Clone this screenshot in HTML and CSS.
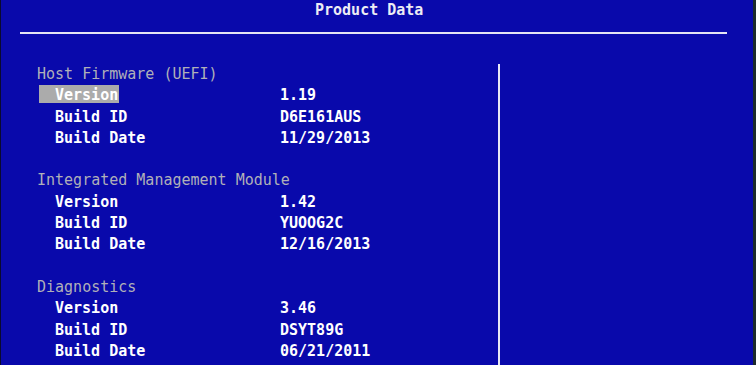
FILE: index.html
```html
<!DOCTYPE html>
<html>
<head>
<meta charset="utf-8">
<link rel="stylesheet" href="styles.css">
</head>
<body>
<div class="screen">
  <div class="edge-left"></div>
  <div class="main">
    <header class="header">
      <div class="title">Product Data</div>
      <div class="rule"></div>
    </header>
    <div class="content">
      <div class="panel">
        <section class="group">
          <div class="heading">Host Firmware (UEFI)</div>
          <div class="row"><span class="label selected">Version</span><span class="value">1.19</span></div>
          <div class="row"><span class="label">Build ID</span><span class="value">D6E161AUS</span></div>
          <div class="row"><span class="label">Build Date</span><span class="value">11/29/2013</span></div>
        </section>
        <section class="group">
          <div class="heading">Integrated Management Module</div>
          <div class="row"><span class="label">Version</span><span class="value">1.42</span></div>
          <div class="row"><span class="label">Build ID</span><span class="value">YUOOG2C</span></div>
          <div class="row"><span class="label">Build Date</span><span class="value">12/16/2013</span></div>
        </section>
        <section class="group">
          <div class="heading">Diagnostics</div>
          <div class="row"><span class="label">Version</span><span class="value">3.46</span></div>
          <div class="row"><span class="label">Build ID</span><span class="value">DSYT89G</span></div>
          <div class="row"><span class="label">Build Date</span><span class="value">06/21/2011</span></div>
        </section>
      </div>
      <div class="help"></div>
    </div>
  </div>
  <div class="edge-right"></div>
</div>
</body>
</html>
```

FILE: styles.css
```css
html, body {
  margin: 0;
  padding: 0;
  background: #0909ab;
}
body {
  width: 756px;
  height: 365px;
  overflow: hidden;
  font-family: "DejaVu Sans Mono", "Liberation Mono", monospace;
  font-size: 15px;
  line-height: 21.3px;
  color: #ffffff;
}
.screen {
  display: flex;
  width: 756px;
  height: 365px;
}
.edge-left {
  width: 1px;
  background: #0a0a30;
}
.edge-right {
  width: 3px;
  background: #1c2a2c;
}
.main {
  flex: 1;
  display: flex;
  flex-direction: column;
  min-width: 0;
  min-height: 0;
}
.header {
  height: 64px;
  flex-shrink: 0;
}
.title {
  height: 32px;
  padding-left: 314px;
  font-weight: bold;
  color: #ececf4;
  white-space: pre;
}
.rule {
  margin-left: 19px;
  width: 707px;
  height: 2px;
  background: #e4e4f4;
}
.content {
  flex: 1;
  display: flex;
  min-height: 0;
  overflow: hidden;
}
.panel {
  width: 497px;
  padding-left: 36px;
  box-sizing: border-box;
  flex-shrink: 0;
}
.help {
  flex: 1;
  border-left: 2px solid #e8e8f4;
}
.group {
  margin-bottom: 21.3px;
}
.heading {
  color: #b0b0b8;
  white-space: pre;
}
.row {
  display: grid;
  grid-template-columns: 243px auto;
  font-weight: bold;
  white-space: pre;
}
.label {
  padding-left: 18px;
  justify-self: start;
}
.label.selected {
  background: #ababab;
  height: 18px;
  line-height: 21.3px;
  margin-left: 2px;
  padding-left: 16px;
  padding-right: 1px;
}
.value {
  color: #ffffff;
}
```
